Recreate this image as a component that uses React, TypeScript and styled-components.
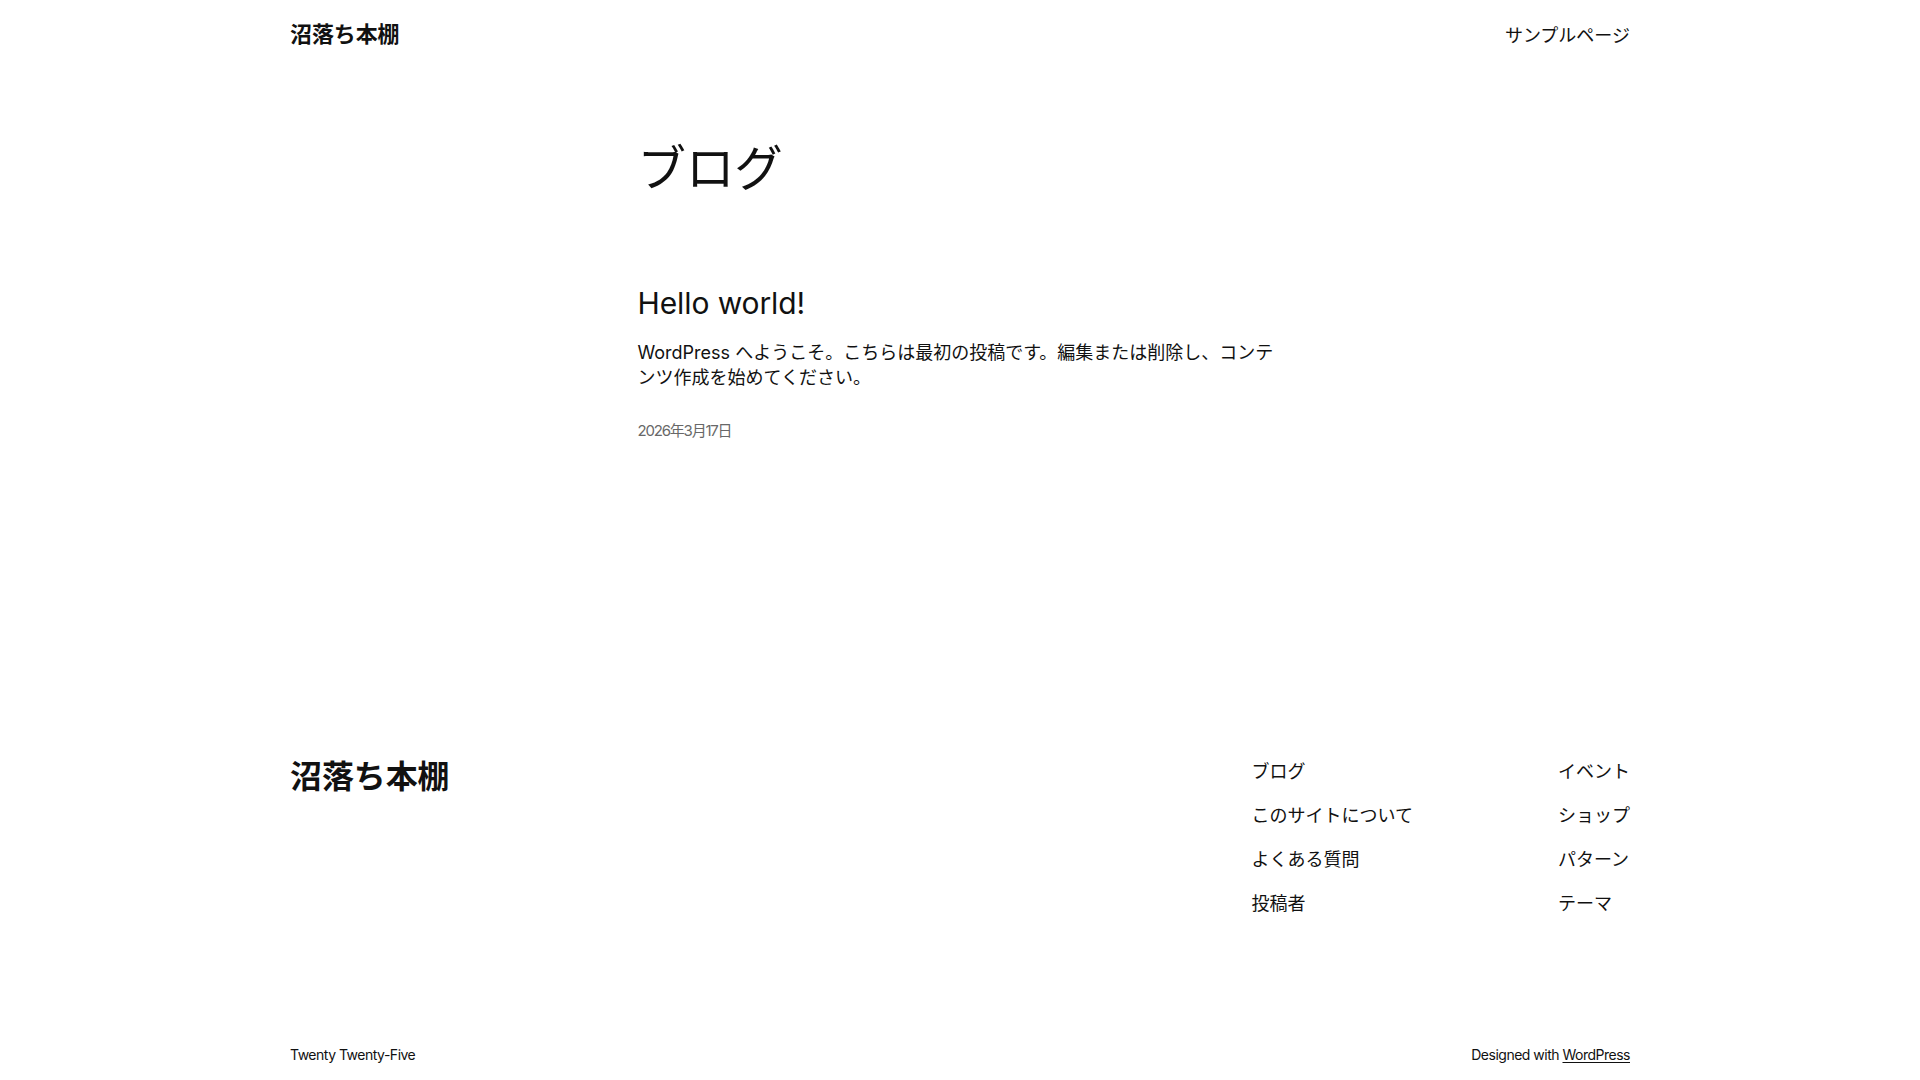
import React from "react";
import styled, { createGlobalStyle } from "styled-components";

const GlobalStyle = createGlobalStyle`
  html, body { margin: 0; padding: 0; background: #ffffff; }
  body {
    font-family: "Inter", "Noto Sans CJK JP", sans-serif;
    color: #111111;
    -webkit-font-smoothing: antialiased;
  }
  a { color: inherit; text-decoration: none; }
`;

const Page = styled.div`
  min-height: 1080px;
  display: flex;
  flex-direction: column;
`;

const Wide = styled.div`
  width: 1340px;
  margin: 0 auto;
`;

const Header = styled(Wide)`
  display: flex;
  justify-content: space-between;
  align-items: center;
  padding: 21px 0;
`;

const SiteTitle = styled.a<{ $size: number }>`
  font-size: ${(p) => p.$size}px;
  font-weight: 700;
  line-height: 1.2;
  letter-spacing: -0.1px;
`;

const NavLink = styled.a`
  font-size: 18px;
  line-height: 1.4;
`;

const HeaderNav = styled(NavLink)`
  position: relative;
  top: 1px;
`;

const Main = styled.main`
  width: 645px;
  margin: 72px auto 0;
`;

const PageTitle = styled.h1`
  margin: 0;
  font-size: 48.5px;
  font-weight: 400;
  line-height: 1.2;
  letter-spacing: -0.1px;
`;

const Post = styled.article`
  margin-top: 86px;
  display: flex;
  flex-direction: column;
`;

const PostTitle = styled.h2`
  margin: 0;
  font-size: 30px;
  font-weight: 400;
  line-height: 1.2;
  letter-spacing: -0.1px;
`;

const Excerpt = styled.p`
  margin: 19.5px 0 0;
  font-size: 18px;
  line-height: 1.4;
`;

const PostDate = styled.time`
  margin-top: 30px;
  font-size: 15px;
  line-height: 1.4;
  letter-spacing: -1.2px;
  color: #686868;
`;

const Footer = styled(Wide)`
  margin-top: 317px;
  display: flex;
  flex-direction: column;
`;

const FooterTop = styled.div`
  display: flex;
  justify-content: space-between;
  align-items: flex-start;
`;

const FooterNavs = styled.div`
  display: flex;
  gap: 145px;
  padding-top: 1px;
`;

const NavColumn = styled.nav`
  display: flex;
  flex-direction: column;
  gap: 18.8px;
`;

const FooterBottom = styled.div`
  margin-top: 127px;
  display: flex;
  justify-content: space-between;
  align-items: center;
  font-size: 14px;
  line-height: 1.5;
  letter-spacing: -0.5px;
`;

const Underlined = styled.a`
  text-decoration: underline;
  text-underline-offset: 2px;
`;

export default function App() {
  return (
    <>
      <GlobalStyle />
      <Page>
        <Header>
          <SiteTitle $size={22}>沼落ち本棚</SiteTitle>
          <HeaderNav>サンプルページ</HeaderNav>
        </Header>
        <Main>
          <PageTitle>ブログ</PageTitle>
          <Post>
            <PostTitle>Hello world!</PostTitle>
            <Excerpt>
              WordPress へようこそ。こちらは最初の投稿です。編集または削除し、コンテンツ作成を始めてください。
            </Excerpt>
            <PostDate>2026年3月17日</PostDate>
          </Post>
        </Main>
        <Footer>
          <FooterTop>
            <SiteTitle $size={32}>沼落ち本棚</SiteTitle>
            <FooterNavs>
              <NavColumn>
                <NavLink>ブログ</NavLink>
                <NavLink>このサイトについて</NavLink>
                <NavLink>よくある質問</NavLink>
                <NavLink>投稿者</NavLink>
              </NavColumn>
              <NavColumn>
                <NavLink>イベント</NavLink>
                <NavLink>ショップ</NavLink>
                <NavLink>パターン</NavLink>
                <NavLink>テーマ</NavLink>
              </NavColumn>
            </FooterNavs>
          </FooterTop>
          <FooterBottom>
            <span>Twenty Twenty-Five</span>
            <span>
              Designed with <Underlined>WordPress</Underlined>
            </span>
          </FooterBottom>
        </Footer>
      </Page>
    </>
  );
}
